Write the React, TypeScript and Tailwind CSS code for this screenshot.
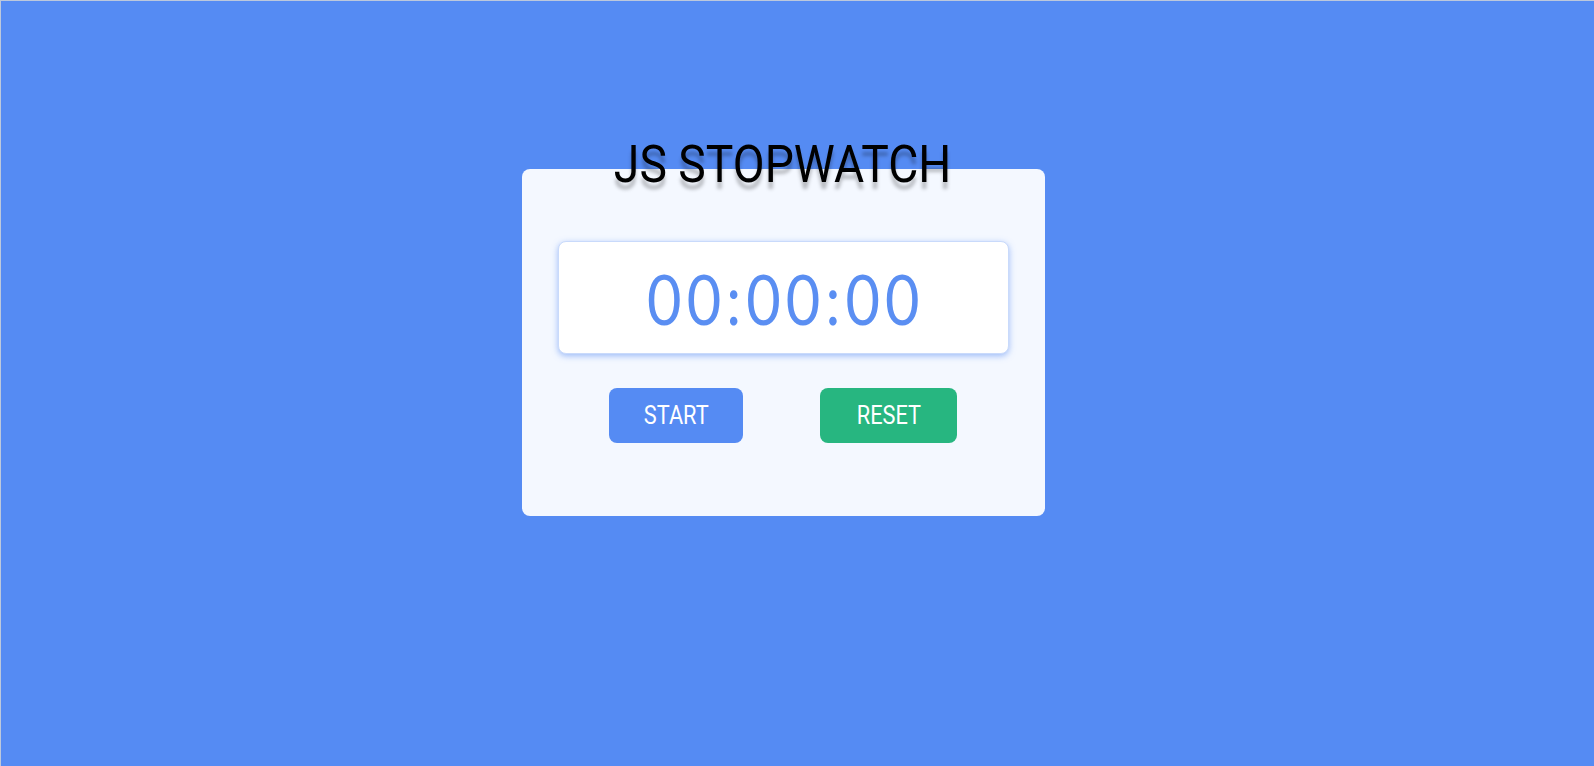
import React, { useEffect, useRef, useState } from 'react';

const pad = (n: number) => String(n).padStart(2, '0');

export default function App() {
  const [running, setRunning] = useState(false);
  const [ticks, setTicks] = useState(0); // hundredths of a second
  const timer = useRef<number | null>(null);

  useEffect(() => {
    if (!running) return;
    timer.current = window.setInterval(() => setTicks((t) => t + 1), 10);
    return () => {
      if (timer.current) window.clearInterval(timer.current);
    };
  }, [running]);

  const mins = Math.floor(ticks / 6000);
  const secs = Math.floor(ticks / 100) % 60;
  const hund = ticks % 100;

  const reset = () => {
    setRunning(false);
    setTicks(0);
  };

  return (
    <div className="min-h-screen bg-[#558bf3] border-t border-l border-[#bcc8dc] font-['Roboto',_'Liberation_Sans',_sans-serif]">
      <div className="flex flex-col items-center pt-[133px] pr-[29px]">
        <h1 className="relative z-10 text-[52px] leading-[61px] font-normal text-black [text-shadow:0_7px_4px_rgba(0,0,0,0.25)]">
          <span className="inline-block scale-x-[0.89]">JS STOPWATCH</span>
        </h1>

        <div className="-mt-[26px] w-[523px] rounded-lg bg-[#f4f8ff] px-9 pt-[72px] pb-[73px]">
          <div className="flex h-[113px] items-center justify-center rounded-lg border border-[#c9dafb] bg-white shadow-[0_2px_6px_rgba(85,139,242,0.55)]">
            <span className="inline-block pl-[6px] font-['Lato',_'Open_Sans',_sans-serif] text-[70px] leading-[82px] tracking-[6px] text-[#5a8ef2] scale-x-[0.85]">
              {pad(mins)}:{pad(secs)}:{pad(hund)}
            </span>
          </div>

          <div className="mt-[34px] flex justify-center gap-[77px]">
            <button
              onClick={() => setRunning((r) => !r)}
              className="flex h-[55px] w-[134px] items-center justify-center rounded-lg bg-[#558bf3] text-[25px] text-white"
            >
              <span className="inline-block scale-x-[0.87]">{running ? 'STOP' : 'START'}</span>
            </button>
            <button
              onClick={reset}
              className="flex h-[55px] w-[137px] items-center justify-center rounded-lg bg-[#27b680] text-[25px] text-white"
            >
              <span className="inline-block scale-x-[0.87]">RESET</span>
            </button>
          </div>
        </div>
      </div>
    </div>
  );
}
